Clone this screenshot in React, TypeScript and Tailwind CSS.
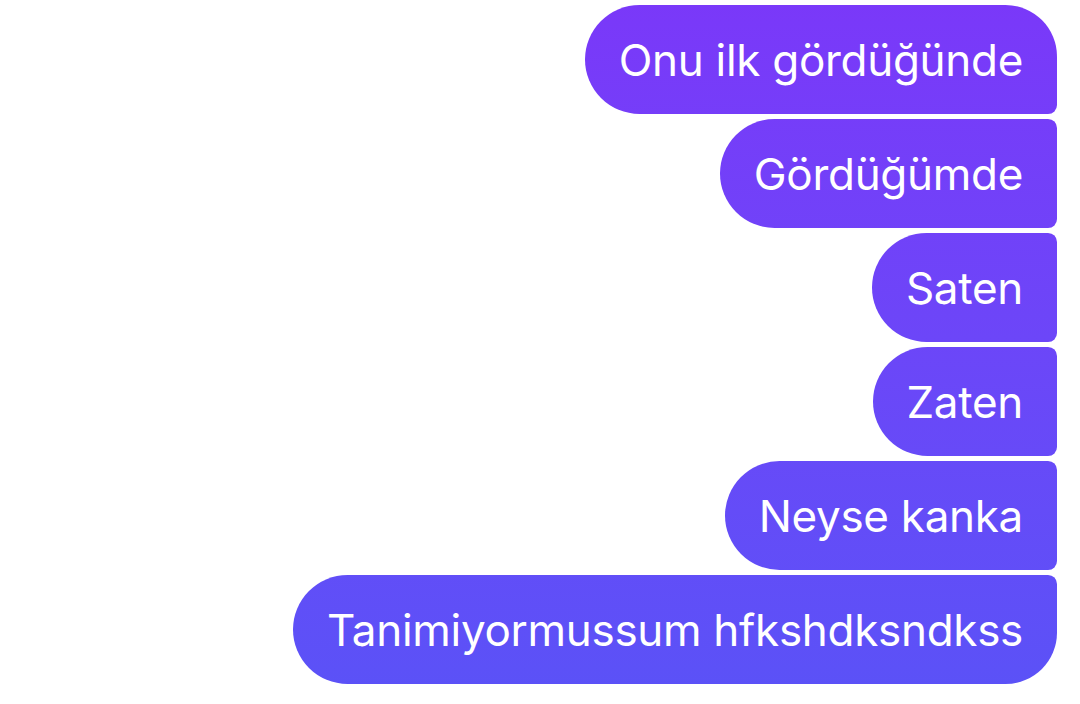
import React from "react";

const messages = [
  "Onu ilk gördüğünde",
  "Gördüğümde",
  "Saten",
  "Zaten",
  "Neyse kanka",
  "Tanimiyormussum hfkshdksndkss",
];

const Bubble = ({ text, first, last }: { text: string; first: boolean; last: boolean }) => {
  return (
    <div
      className={
        "flex h-[109px] items-center rounded-l-[55px] rounded-r-[9px] bg-fixed bg-linear-to-b from-[#7a38f9] to-[#5a52f7] px-[34px] text-white " +
        (first ? "rounded-tr-[52px] " : "") +
        (last ? "rounded-br-[52px] " : "")
      }
    >
      <span className="text-[44px] leading-none tracking-[-0.3px]">{text}</span>
    </div>
  );
};

export default function App() {
  return (
    <div
      className="flex h-[704px] w-[1080px] flex-col items-end gap-[5px] bg-white pt-[5px] pr-[23px]"
      style={{ fontFamily: "Inter, 'Noto Sans', sans-serif" }}
    >
      {messages.map((m, i) => (
        <Bubble key={i} text={m} first={i === 0} last={i === messages.length - 1} />
      ))}
    </div>
  );
}
